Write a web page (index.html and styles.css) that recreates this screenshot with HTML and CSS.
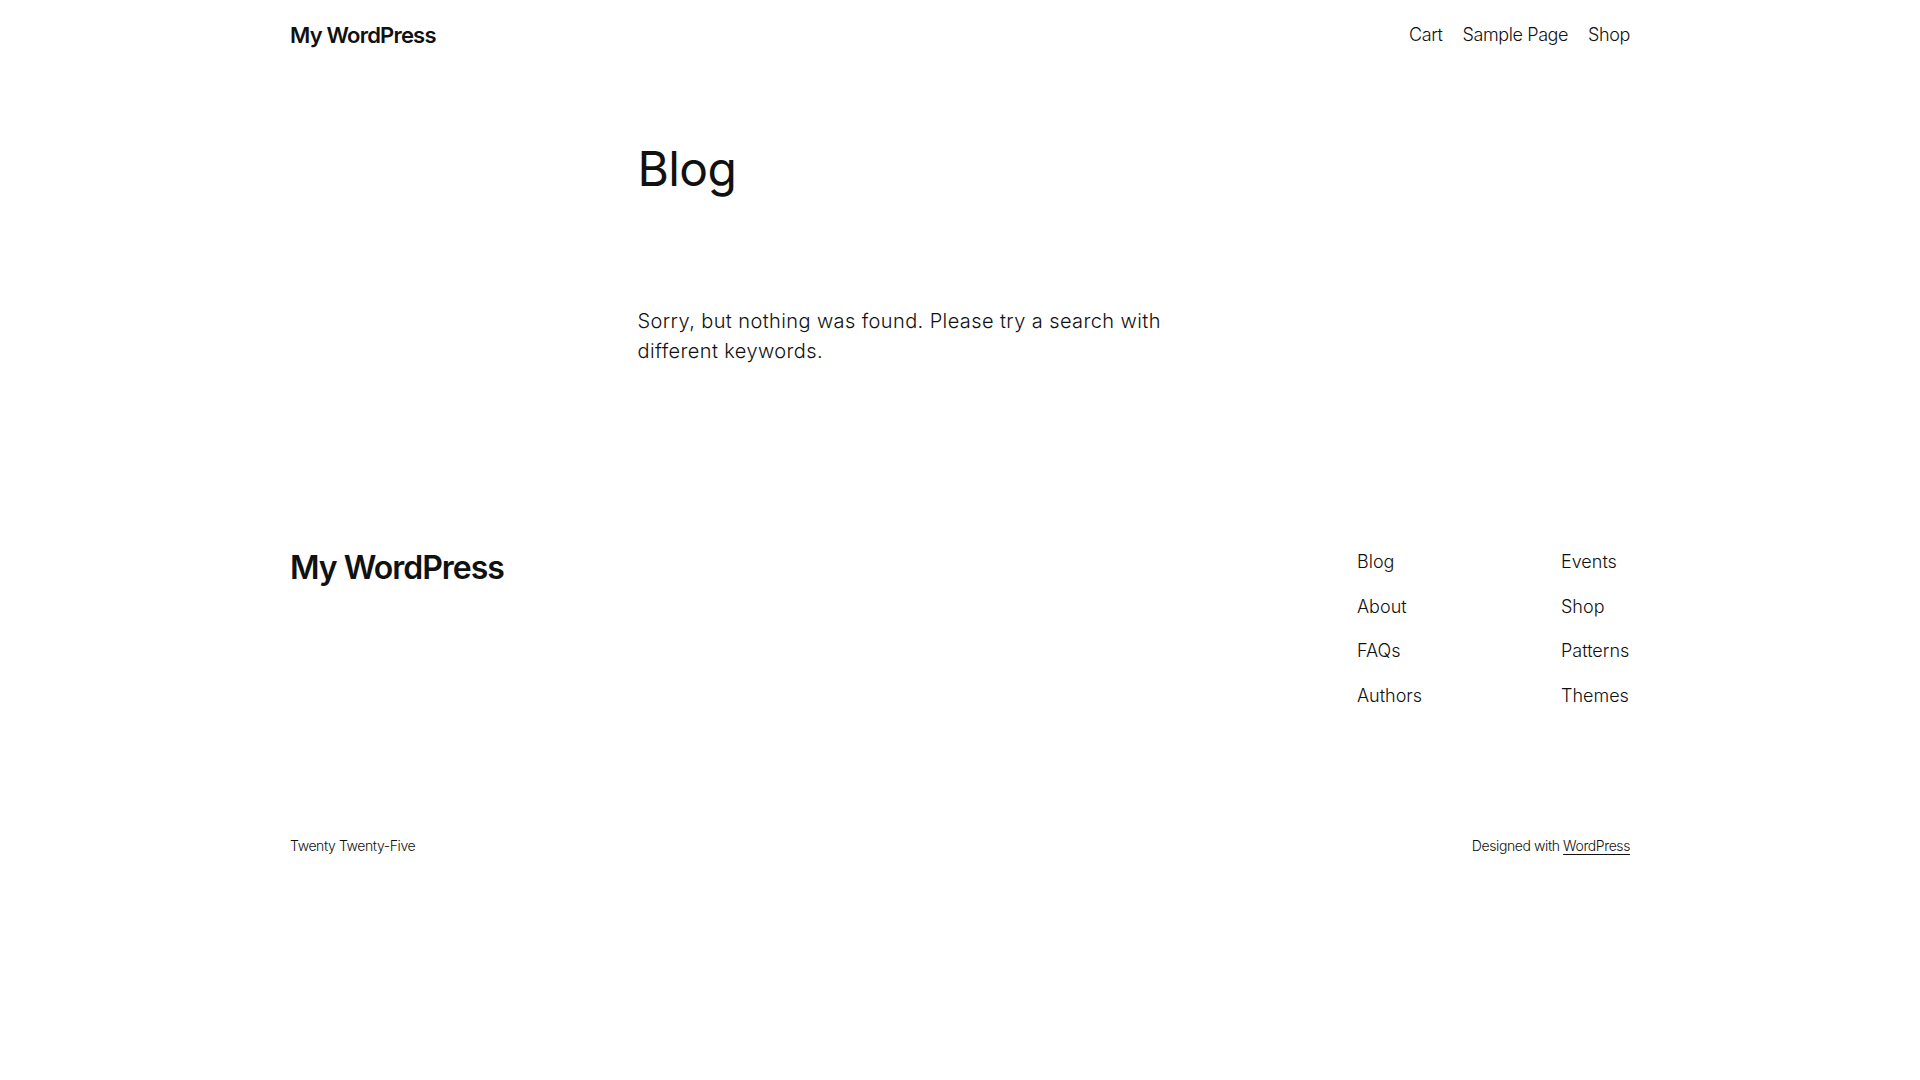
FILE: index.html
```html
<!DOCTYPE html>
<html lang="en">
<head>
<meta charset="utf-8">
<title>Blog – My WordPress</title>
<link rel="stylesheet" href="styles.css">
</head>
<body>
<div class="page">
  <header class="site-header">
    <a class="site-title" href="#">My WordPress</a>
    <nav class="header-nav">
      <a href="#">Cart</a>
      <a href="#">Sample Page</a>
      <a href="#">Shop</a>
    </nav>
  </header>

  <main class="site-main">
    <h1 class="page-title">Blog</h1>
    <p class="no-results">Sorry, but nothing was found. Please try a search with<br>different keywords.</p>
  </main>

  <footer class="site-footer">
    <div class="footer-top">
      <a class="footer-title" href="#">My WordPress</a>
      <div class="footer-navs">
        <nav class="footer-col footer-col-1">
          <a href="#">Blog</a>
          <a href="#">About</a>
          <a href="#">FAQs</a>
          <a href="#">Authors</a>
        </nav>
        <nav class="footer-col footer-col-2">
          <a href="#">Events</a>
          <a href="#">Shop</a>
          <a href="#">Patterns</a>
          <a href="#">Themes</a>
        </nav>
      </div>
    </div>
    <div class="footer-bottom">
      <span class="theme-name">Twenty Twenty-Five</span>
      <span class="credit">Designed with <a href="#">WordPress</a></span>
    </div>
  </footer>
</div>
</body>
</html>
```

FILE: styles.css
```css
* {
  box-sizing: border-box;
}

html, body {
  margin: 0;
  padding: 0;
  background: #ffffff;
}

body {
  font-family: Inter, "Noto Sans", "DejaVu Sans", sans-serif;
  font-weight: 300;
  color: #111111;
}

a {
  color: #111111;
  text-decoration: none;
}

.page {
  width: 1340px;
  margin: 0 auto;
}

/* Header */
.site-header {
  display: flex;
  justify-content: space-between;
  align-items: center;
  padding: 20px 0;
}

.site-title {
  font-size: 22px;
  line-height: 30px;
  font-weight: 600;
  letter-spacing: -0.8px;
}

.header-nav {
  display: flex;
  gap: 20px;
  font-size: 18px;
  line-height: 30px;
  letter-spacing: -0.4px;
}

/* Main */
.site-main {
  width: 645px;
  margin: 0 auto;
  padding-top: 72px;
}

.page-title {
  margin: 0;
  font-size: 48px;
  line-height: 54px;
  font-weight: 400;
  letter-spacing: -0.6px;
}

.no-results {
  margin: 110px 0 0;
  font-size: 20px;
  line-height: 30px;
  letter-spacing: 0.4px;
}

/* Footer */
.site-footer {
  padding-top: 180px;
}

.footer-top {
  display: flex;
  justify-content: space-between;
  align-items: flex-start;
}

.footer-title {
  margin-top: 2px;
  font-size: 32px;
  line-height: 40px;
  font-weight: 600;
  letter-spacing: -1px;
}

.footer-navs {
  display: flex;
  padding-top: 1px;
}

.footer-col {
  display: flex;
  flex-direction: column;
  gap: 14.5px;
  font-size: 18px;
  line-height: 30px;
  white-space: nowrap;
}

.footer-col-1 {
  width: 204px;
}

.footer-col-2 {
  width: 69px;
}

.footer-bottom {
  display: flex;
  justify-content: space-between;
  margin-top: 125px;
  font-size: 14px;
  line-height: 20px;
  letter-spacing: -0.4px;
}

.credit a {
  text-decoration: underline;
  text-underline-offset: 3px;
  text-decoration-thickness: 1px;
}
```
